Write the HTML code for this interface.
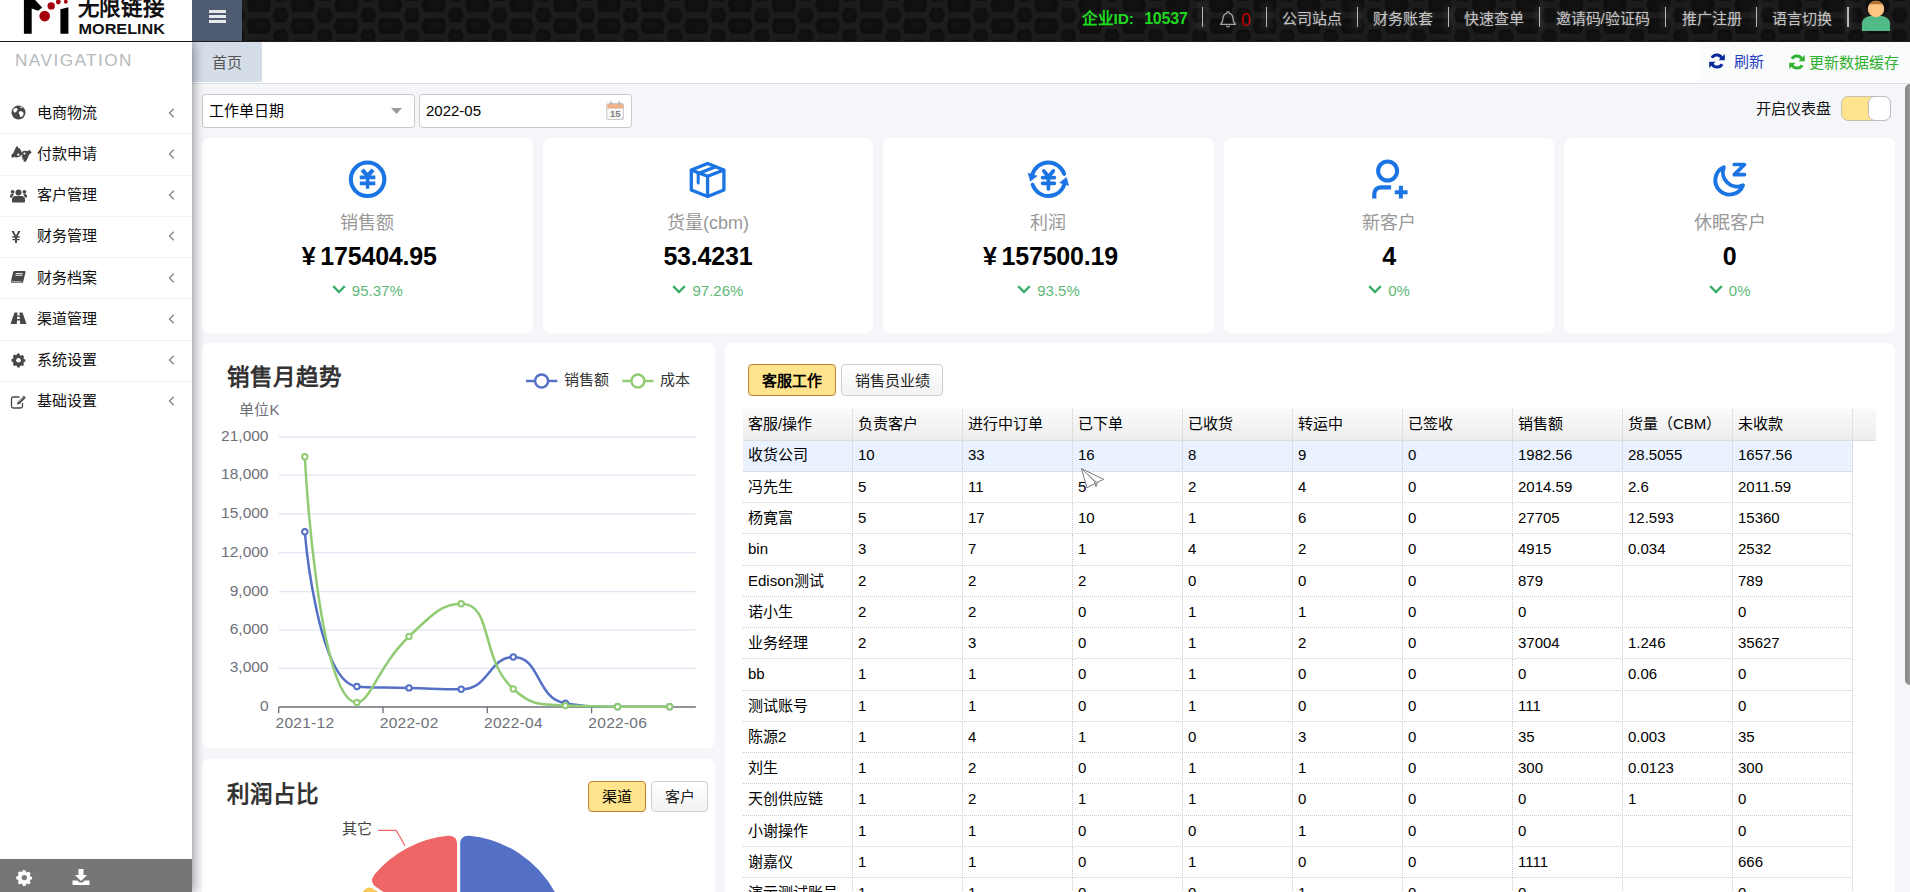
<!DOCTYPE html>
<html lang="zh-CN">
<head>
<meta charset="utf-8">
<title>MoreLink</title>
<style>
*{box-sizing:border-box;margin:0;padding:0}
html,body{width:1910px;height:892px;overflow:hidden}
body{font-family:"Liberation Sans",sans-serif;font-size:15px;color:#000;background:#f5f6fa;position:relative}
.abs{position:absolute}
#header{position:absolute;left:0;top:0;width:1910px;height:42px;background:#18181a;overflow:hidden;z-index:6}
#hexbg{position:absolute;left:242px;top:0;width:1668px;height:42px}
#logo{position:absolute;left:0;top:0;width:192px;height:41px;background:#fff;overflow:hidden}
#burger{position:absolute;left:192px;top:0;width:50px;height:41px;background:#4f5b70}
#burger i{position:absolute;left:17.4px;width:16.6px;height:3.2px;background:#e6e8ec}
#hline{position:absolute;left:0;top:41px;width:1910px;height:1px;background:#1c1c1c}
.tn{position:absolute;top:9px;height:20px;line-height:20px;font-size:15px;color:#c4c4c4;white-space:nowrap;text-shadow:0 0 2px rgba(255,255,255,.25)}
.tsep{position:absolute;top:7px;width:1.3px;height:20px;background:#b6b6b6;box-shadow:0 0 7px 3px rgba(255,255,255,.09)}
#sidebar{position:absolute;left:0;top:42px;width:192px;height:850px;background:#fff;box-shadow:1px 0 11px rgba(0,0,0,.45);z-index:5}
#navtitle{position:absolute;left:15px;top:8px;font-size:17.2px;line-height:20px;letter-spacing:1.45px;color:#b3babd}
.mi{position:absolute;left:0;width:192px;height:41.25px;border-bottom:1px solid #f0f1f3}
.mi span{position:absolute;left:37px;top:9.5px;font-size:15px;color:#111;line-height:20px;white-space:nowrap}
.mi svg.ic{position:absolute;left:9px;top:10px;width:19px;height:19px;overflow:visible}
.mi svg.ch{position:absolute;left:168px;top:14.5px;width:7px;height:10px}
#sbfoot{position:absolute;left:0;top:817px;width:192px;height:33px;background:#767676}
#tabs{position:absolute;left:192px;top:42px;width:1718px;height:41.7px;background:#fff;border-bottom:1px solid #dcdfe3}
#tab1{position:absolute;left:0;top:0;width:70px;height:39.7px;background:#d5dde9;color:#555;font-size:15px;line-height:41px;text-align:center}
#tools{position:absolute;left:1507px;top:0;width:211px;height:40px;background:#fafbfb}
.card{position:absolute;background:#fff;border-radius:7px}
.sel{position:absolute;top:94px;height:34px;background:#fff;border:1px solid #c9c9c9;border-radius:3.5px;font-size:15px;line-height:32px;padding-left:6px;color:#000}
.st-l{position:absolute;left:0;width:100%;text-align:center;font-size:18px;color:#999;top:73px;line-height:24px}
.st-v{position:absolute;left:0;width:100%;text-align:center;font-size:25px;font-weight:bold;color:#000;top:103px;line-height:30px;letter-spacing:-0.2px;white-space:nowrap}
.st-p{position:absolute;left:0;width:100%;text-align:center;font-size:15px;color:#5fb878;top:142.5px;line-height:20px;white-space:nowrap}
.st-p svg{display:inline-block;width:14px;height:9px;margin-right:6px;vertical-align:2px}
.st-i{position:absolute;left:50%;top:19px;width:44px;height:44px;margin-left:-21.5px}
.btn{position:absolute;height:32px;line-height:30px;text-align:center;font-size:15px;border-radius:4px;border:1px solid #cfcfcf;background:linear-gradient(#fff,#f2f2f2);color:#222;white-space:nowrap}
.btn.on{background:#ffe48d;border-color:#bd8234;color:#000}
.h2{position:absolute;font-size:22px;font-weight:bold;color:#333;line-height:30px;white-space:nowrap}
#grid{position:absolute;left:743px;top:409px;width:1133px;height:500px;overflow:hidden;font-size:15px}
#ghead{position:absolute;left:0;top:0;width:1133px;height:31.5px;background:linear-gradient(#fafafa,#ededed);border-bottom:1px solid #ddd}
.gh{position:absolute;top:0;height:31px;line-height:30px;padding-left:5px;border-right:1px dotted #ccc;white-space:nowrap;overflow:hidden}
.gr{position:absolute;left:0;width:1110px;height:31.25px;line-height:29px;border-bottom:1px dotted #ccc}
.gc{position:absolute;top:0;height:31.25px;line-height:inherit;padding-left:5px;border-right:1px dotted #ccc;white-space:nowrap;overflow:hidden}
</style>
</head>
<body>
<div id="header">
<svg id="hexbg" width="1668" height="42">
<defs>
<radialGradient id="hg" cx="50%" cy="50%" r="60%"><stop offset="0" stop-color="#131314"/><stop offset="1" stop-color="#0d0d0e"/></radialGradient>
<pattern id="hx" x="-5" y="-6.1" width="43.75" height="21.4" patternUnits="userSpaceOnUse">
<rect width="43.75" height="21.4" fill="#1c1c1d"/>

<polygon points="9.575,10.7 12.175,3.250 31.575,3.250 34.175,10.7 31.575,18.150 12.175,18.150" fill="url(#hg)"/>
<polygon points="-8,0 -5,-7.2 5,-7.2 8,0 5,7.2 -5,7.2" fill="url(#hg)"/>
<polygon points="35.75,0 38.75,-7.2 48.75,-7.2 51.75,0 48.75,7.2 38.75,7.2" fill="url(#hg)"/>
<polygon points="-8,21.4 -5,14.2 5,14.2 8,21.4 5,28.6 -5,28.6" fill="url(#hg)"/>
<polygon points="35.75,21.4 38.75,14.2 48.75,14.2 51.75,21.4 48.75,28.6 38.75,28.6" fill="url(#hg)"/>
</pattern>
</defs>
<rect width="1668" height="42" fill="url(#hx)"/>
</svg>
<div id="logo"><svg width="192" height="41" viewBox="0 0 192 41">
<polygon points="23.9,-2 33.2,-2 42.2,7.500 38.1,10.700 31.7,8.600 31.7,33.700 23.9,33.700" fill="#000"/>
<polygon points="60.4,9.300 68.4,7.300 68.4,33.700 60.4,33.700" fill="#000"/>
<circle cx="44.7" cy="16.1" r="5.300" fill="#a3000b"/>
<circle cx="51.2" cy="5.9" r="3.700" fill="#a8000c"/>
<circle cx="58.3" cy="2" r="2.400" fill="#a8000c"/>
<circle cx="65.8" cy="1.8" r="1.900" fill="#a8000c"/>
<text x="77.5" y="15.3" font-family="Liberation Sans, sans-serif" font-weight="bold" font-size="22.5" textLength="87.5" lengthAdjust="spacingAndGlyphs" fill="#111">无限链接</text>
<text x="78.5" y="33.6" font-family="Liberation Sans, sans-serif" font-weight="bold" font-size="14.4" textLength="86.5" lengthAdjust="spacingAndGlyphs" fill="#111">MORELINK</text>
</svg></div>
<div id="burger"><i style="top:10.2px"></i><i style="top:15px"></i><i style="top:19.8px"></i></div>
<div id="hline"></div>
<div class="tn" style="left:1082px;color:#1fd91f;font-weight:bold;font-size:15.5px;text-shadow:none;letter-spacing:-0.2px">企业ID:<span style="margin-left:10.5px;font-size:16px">10537</span></div>
<div class="tsep" style="left:1201.95px"></div>
<div class="tsep" style="left:1265.65px"></div>
<div class="tsep" style="left:1356.75px"></div>
<div class="tsep" style="left:1447.95px"></div>
<div class="tsep" style="left:1539.15px"></div>
<div class="tsep" style="left:1665.15px"></div>
<div class="tsep" style="left:1755.95px"></div>
<div class="tsep" style="left:1847.35px"></div>
<svg class="abs" style="left:1219px;top:9.6px" width="18" height="19" viewBox="0 0 18 19"><path d="M9 1.6c-.7 0-1.2.5-1.2 1.2v.5C5.4 3.9 4 6 4 8.6c0 3.6-1.2 4.7-2.4 5.7h14.8C15.200 13.300 14 12.200 14 8.600c0-2.600-1.400-4.700-3.800-5.300v-.5C10.200 2.100 9.700 1.600 9 1.600z" fill="none" stroke="#a4a4a4" stroke-width="1.3" stroke-linejoin="round"/><path d="M7.300 15.600a1.800 1.800 0 0 0 3.400 0" fill="none" stroke="#a4a4a4" stroke-width="1.3"/></svg>
<div class="tn" style="left:1241px;top:9.5px;color:#c40000;text-shadow:none;font-size:17.5px">0</div>
<div class="tn" style="left:1282px">公司站点</div>
<div class="tn" style="left:1373px">财务账套</div>
<div class="tn" style="left:1464.4px">快速查单</div>
<div class="tn" style="left:1555.5px">邀请码/验证码</div>
<div class="tn" style="left:1681.5px">推广注册</div>
<div class="tn" style="left:1772.3px">语言切换</div>
<svg class="abs" style="left:1861px;top:0" width="30" height="32" viewBox="0 0 30 32"><defs><clipPath id="hc"><rect x="0" y="0" width="30" height="4.200"/></clipPath><linearGradient id="hair" x1="0" y1="0" x2="0" y2="1"><stop offset="0" stop-color="#a9641f"/><stop offset="1" stop-color="#d08f52"/></linearGradient></defs><path d="M.9 31V24C.9 19 5 16.500 9.500 16H20.500C25 16.500 29.100 19 29.100 24V31z" fill="#50b985"/><circle cx="15" cy="9" r="8.200" fill="#fdc483"/><circle cx="15" cy="9" r="8.200" fill="#b5702d" clip-path="url(#hc)"/></svg>
</div>
<div id="tabs"><div id="tab1">首页</div><div id="tools"></div>
<div class="abs" style="left:1517px;top:11px;width:16px;height:16px"><svg width="16" height="16" viewBox="0 0 16 16"><path d="M13.300 6.200A5.700 5.700 0 0 0 2.900 4.700" fill="none" stroke="#0a2a9a" stroke-width="3"/><path d="M2.700 9.800A5.700 5.700 0 0 0 13.100 11.300" fill="none" stroke="#0a2a9a" stroke-width="3"/><path d="M9.600 7.200h6.200V1z" fill="#0a2a9a"/><path d="M6.400 8.800H.2V15z" fill="#0a2a9a"/></svg></div>
<div class="abs" style="left:1541.5px;top:10px;font-size:15px;line-height:20px;color:#2440c0">刷新</div>
<div class="abs" style="left:1596.5px;top:11.5px;width:16px;height:16px"><svg width="16" height="16" viewBox="0 0 16 16"><path d="M13.300 6.200A5.700 5.700 0 0 0 2.900 4.700" fill="none" stroke="#35b335" stroke-width="3"/><path d="M2.700 9.800A5.700 5.700 0 0 0 13.100 11.300" fill="none" stroke="#35b335" stroke-width="3"/><path d="M9.600 7.200h6.200V1z" fill="#35b335"/><path d="M6.400 8.800H.2V15z" fill="#35b335"/></svg></div>
<div class="abs" style="left:1616.5px;top:11px;font-size:15px;line-height:20px;color:#2eb02e;white-space:nowrap">更新数据缓存</div>
</div>
<div id="sidebar"><div id="navtitle">NAVIGATION</div>
<div class="mi" style="top:51.0px;"><svg class="ic" viewBox="0 0 19 19"><circle cx="9.500" cy="9.500" r="7" fill="#484848"/><path d="M5 5.500c1.500-1 3-.5 3.500.5s-.5 1.500-1 2.500S6 10 5 9 4 6.500 5 5.500zM10.500 8.500c1.500-.5 3.500 0 4 1.500s-1 3.500-2.500 4-1-1.500-1.500-2.500-1.500-2.500 0-3zM11 3.500c1 0 2 .5 2.500 1.500-1 .5-2 0-2.500-1.500z" fill="#fff"/></svg><span>电商物流</span><svg class="ch" viewBox="0 0 7 10"><path d="M5.800 .8L1.500 5l4.300 4.200" fill="none" stroke="#8a8a8a" stroke-width="1.400"/></svg></div>
<div class="mi" style="top:92.25px;"><svg class="ic" viewBox="0 0 19 19"><g transform="translate(0 .7)"><path d="M2.200 10.500L4.500 8 7 2.200 8.500 1.200 9.300 3.200 10.800 3.500 11.300 5 12.500 6 12 7.500 13 9 11 11.700 8 12.700 5 12.200 3 13.200z" fill="#484848"/><path d="M12.300 7.500L15 6 19 6.200 20.500 5 22.700 7.700 20 10 18.500 14 16.500 17.200 14.300 16.500 15 15 12.800 14.500 14 13 12.300 12 13.500 10.500 11.800 9.500z" fill="#484848"/><circle cx="9.300" cy="10" r="1.100" fill="#fff"/><circle cx="15.400" cy="8.800" r="1.100" fill="#fff"/></g></svg><span>付款申请</span><svg class="ch" viewBox="0 0 7 10"><path d="M5.800 .8L1.500 5l4.300 4.200" fill="none" stroke="#8a8a8a" stroke-width="1.400"/></svg></div>
<div class="mi" style="top:133.5px;"><svg class="ic" viewBox="0 0 19 19"><circle cx="9.500" cy="6.500" r="3" fill="#484848"/><path d="M4 16.500c-.5 0-1-.4-1-1v-2c0-2 1.600-3.500 3.500-3.500h6c1.900 0 3.500 1.500 3.500 3.500v2c0 .6-.5 1-1 1z" fill="#484848"/><circle cx="3.600" cy="5.800" r="1.900" fill="#484848"/><circle cx="15.400" cy="5.800" r="1.900" fill="#484848"/><path d="M1 11.500V10c0-1.200 1-2 2-2h2c-.8.800-1.500 2-1.600 3.500zM18 11.500V10c0-1.200-1-2-2-2h-2c.8.800 1.500 2 1.600 3.500z" fill="#484848"/></svg><span>客户管理</span><svg class="ch" viewBox="0 0 7 10"><path d="M5.800 .8L1.500 5l4.300 4.200" fill="none" stroke="#8a8a8a" stroke-width="1.400"/></svg></div>
<div class="mi" style="top:174.75px;"><svg class="ic" viewBox="0 0 19 19"><path d="M2.500 4h2.300l2.200 4.500L9.200 4h2.300L8.600 9.300h2v1.400H8v1.200h2.600v1.400H8V16H6v-2.700H3.400v-1.400H6v-1.200H3.400V9.300h2z" fill="#484848"/></svg><span>财务管理</span><svg class="ch" viewBox="0 0 7 10"><path d="M5.800 .8L1.500 5l4.300 4.200" fill="none" stroke="#8a8a8a" stroke-width="1.400"/></svg></div>
<div class="mi" style="top:216.0px;"><svg class="ic" viewBox="0 0 19 19"><path d="M5.500 3h10c.8 0 1.200.6 1 1.300l-2.300 9.400c-.2.800-.9 1.300-1.700 1.300H3.700c-1.200 0-2-.9-1.700-2l2-8.500C4.200 3.600 4.800 3 5.500 3z" fill="#484848"/><path d="M6.800 5.600h7M6.400 7.300h7" stroke="#fff" stroke-width=".9"/><path d="M3 12.700c0 .8.500 1.200 1.200 1.200h8.600" stroke="#fff" stroke-width=".8" fill="none"/></svg><span>财务档案</span><svg class="ch" viewBox="0 0 7 10"><path d="M5.800 .8L1.500 5l4.300 4.200" fill="none" stroke="#8a8a8a" stroke-width="1.400"/></svg></div>
<div class="mi" style="top:257.25px;"><svg class="ic" viewBox="0 0 19 19"><path d="M5.500 3.500h3l-.2 3h2.400l-.2-3h3l4 11.500h-6.300l-.2-3.500H8l-.2 3.500H1.500zM8.200 7.800l-.1 2.200h2.800l-.1-2.200z" fill="#484848"/></svg><span>渠道管理</span><svg class="ch" viewBox="0 0 7 10"><path d="M5.800 .8L1.500 5l4.300 4.200" fill="none" stroke="#8a8a8a" stroke-width="1.400"/></svg></div>
<div class="mi" style="top:298.5px;"><svg class="ic" viewBox="0 0 19 19"><path d="M9.500 2.500l1.300.1.500 1.700 1.300.6 1.600-.8 1.700 1.700-.8 1.600.6 1.300 1.700.5v2.400l-1.700.5-.6 1.300.8 1.600-1.700 1.700-1.600-.8-1.300.6-.5 1.700H8.200l-.5-1.700-1.300-.6-1.600.8-1.700-1.700.8-1.600-.6-1.300-1.700-.5V8.700l1.700-.5.6-1.300-.8-1.600L4.800 3.600l1.600.8 1.300-.6.5-1.700z" fill="#484848" transform="translate(1.1 .4) scale(.88)"/><circle cx="9.500" cy="9.200" r="2.300" fill="#fff"/></svg><span>系统设置</span><svg class="ch" viewBox="0 0 7 10"><path d="M5.800 .8L1.500 5l4.300 4.200" fill="none" stroke="#8a8a8a" stroke-width="1.400"/></svg></div>
<div class="mi" style="top:339.75px;border-bottom:none;"><svg class="ic" viewBox="0 0 19 19"><path d="M13.500 11v3.200c0 1-.8 1.800-1.800 1.800H4.300c-1 0-1.800-.8-1.800-1.800V6.800c0-1 .8-1.800 1.800-1.800h6.200" fill="none" stroke="#484848" stroke-width="1.300"/><path d="M8 12.500l.6-2.600 6.200-6.200 2 2-6.200 6.200z" fill="#484848"/><path d="M9.300 10.300l5-5" stroke="#fff" stroke-width=".7"/></svg><span>基础设置</span><svg class="ch" viewBox="0 0 7 10"><path d="M5.800 .8L1.500 5l4.300 4.200" fill="none" stroke="#8a8a8a" stroke-width="1.400"/></svg></div>
<div id="sbfoot">
<svg class="abs" style="left:15px;top:9px" width="19" height="19" viewBox="0 0 19 19"><path d="M9.500 2.500l1.300.1.500 1.700 1.300.6 1.600-.8 1.700 1.700-.8 1.600.6 1.300 1.700.5v2.400l-1.700.5-.6 1.300.8 1.600-1.700 1.700-1.600-.8-1.300.6-.5 1.700H8.200l-.5-1.700-1.300-.6-1.600.8-1.700-1.700.8-1.600-.6-1.300-1.700-.5V8.700l1.700-.5.6-1.300-.8-1.600L4.800 3.600l1.600.8 1.300-.6.5-1.700z" fill="#fff" transform="translate(-.3 -.3)"/><circle cx="9.300" cy="9.600" r="2.700" fill="#797979"/></svg>
<svg class="abs" style="left:71px;top:9px" width="20" height="19" viewBox="0 0 20 19"><path d="M7.500 1h5v6h3.500L10 13 4 7h3.500z" fill="#fff"/><path d="M1.500 12.500h5l2 2h3l2-2h5V17h-17z" fill="#fff"/></svg>
</div></div>
<div class="sel" style="left:202px;width:213px">工作单日期<svg class="abs" style="right:12px;top:13px" width="11" height="6" viewBox="0 0 11 6"><path d="M0 0h11L5.500 6z" fill="#9a9a9a"/></svg></div>
<div class="sel" style="left:419px;width:213px">2022-05<svg class="abs" style="right:6px;top:5px" width="20" height="21" viewBox="0 0 20 21"><rect x="1.800" y="3.500" width="16.700" height="16" rx="1.500" fill="#f8f8f8" stroke="#c6c6c6"/><rect x="2.300" y="4" width="15.700" height="3.600" fill="#f3b48c"/><path d="M2.300 7.900h15.700" stroke="#e2825e" stroke-width=".8"/><rect x="5" y="1.300" width="1.800" height="4.200" rx=".8" fill="#b4b4b4"/><rect x="13.400" y="1.300" width="1.800" height="4.200" rx=".8" fill="#b4b4b4"/><text x="10.200" y="16.600" text-anchor="middle" font-size="9.500" font-weight="bold" font-family="Liberation Sans, sans-serif" fill="#7c7c7c">15</text><path d="M14.500 20h4v-4z" fill="#d6d6d6"/></svg></div>
<div class="abs" style="left:1756px;top:99px;font-size:15px;line-height:20px;color:#111;white-space:nowrap">开启仪表盘</div>
<div class="abs" style="left:1841px;top:96px;width:50px;height:25px;border-radius:7px;background:#ffe48d;border:1px solid #c9c2b0"><div class="abs" style="right:-1px;top:-1px;width:23px;height:25px;border-radius:7px;background:#fff;border:1px solid #bdbdbd"></div></div>
<div class="card" style="left:202.0px;top:138px;width:330.6px;height:195px">
<svg class="st-i" viewBox="0 0 44 44"><circle cx="21.600" cy="22.300" r="16.750" fill="none" stroke="#1b74e4" stroke-width="4.100"/><path d="M16.200 12.800l5.400 6 5.400-6" fill="none" stroke="#1b74e4" stroke-width="4.200"/><path d="M21.600 18.500V31.700" fill="none" stroke="#1b74e4" stroke-width="3.500"/><path d="M13.800 20.400h15.500M13.800 26.300h15.500" fill="none" stroke="#1b74e4" stroke-width="3.700"/></svg>
<div class="st-l">销售额</div><div class="st-v" style="padding-left:4px;">¥ 175404.95</div>
<div class="st-p"><svg viewBox="0 0 14 9"><path d="M1.200 1.200L7 7l5.800-5.800" fill="none" stroke="#3dae6a" stroke-width="2.400"/></svg>95.37%</div>
</div>
<div class="card" style="left:542.6px;top:138px;width:330.6px;height:195px">
<svg class="st-i" viewBox="0 0 44 44"><path d="M21.600 6.500L37.900 13v20L21.600 39.500 5.300 33V13z" fill="none" stroke="#1b74e4" stroke-width="3.300" stroke-linejoin="round"/><path d="M5.300 13L21.600 19.300 37.900 13M21.600 19.300v20" fill="none" stroke="#1b74e4" stroke-width="3.300" stroke-linejoin="round"/><path d="M13 16.300L29.600 9.700" fill="none" stroke="#1b74e4" stroke-width="3.300"/><path d="M12.200 16.500v9.500" stroke="#1b74e4" stroke-width="3" stroke-linecap="round"/></svg>
<div class="st-l">货量(cbm)</div><div class="st-v" style="">53.4231</div>
<div class="st-p"><svg viewBox="0 0 14 9"><path d="M1.200 1.200L7 7l5.800-5.800" fill="none" stroke="#3dae6a" stroke-width="2.400"/></svg>97.26%</div>
</div>
<div class="card" style="left:883.2px;top:138px;width:330.6px;height:195px">
<svg class="st-i" viewBox="0 0 44 44"><path d="M37.200 16.900A16.700 16.700 0 0 0 5.400 17.400" fill="none" stroke="#1b74e4" stroke-width="3.900" stroke-linecap="round"/><path d="M5.600 27.700A16.700 16.700 0 0 0 37.400 27.200" fill="none" stroke="#1b74e4" stroke-width="3.900" stroke-linecap="round"/><path d="M1.200 16.200l8.900 2.700-6.700 5.300z" fill="#1b74e4" stroke="#1b74e4" stroke-width=".6" stroke-linejoin="round"/><path d="M41.600 28.400l-8.900-2.700 6.700-5.300z" fill="#1b74e4" stroke="#1b74e4" stroke-width=".6" stroke-linejoin="round"/><path d="M16.800 14l4.600 5.600 4.900-5.600M21.400 19.600V31.800M15.600 20.600h11.800M15.600 26.300h11.800" fill="none" stroke="#1b74e4" stroke-width="3.700" stroke-linecap="round"/></svg>
<div class="st-l">利润</div><div class="st-v" style="padding-left:4px;">¥ 157500.19</div>
<div class="st-p"><svg viewBox="0 0 14 9"><path d="M1.200 1.200L7 7l5.800-5.800" fill="none" stroke="#3dae6a" stroke-width="2.400"/></svg>93.5%</div>
</div>
<div class="card" style="left:1223.8px;top:138px;width:330.6px;height:195px">
<svg class="st-i" viewBox="0 0 44 44"><circle cx="19.600" cy="14" r="9.500" fill="none" stroke="#1b74e4" stroke-width="4"/><path d="M6.300 41.400V37c0-4 3-6.700 7-6.700h9.800" fill="none" stroke="#1b74e4" stroke-width="4.200"/><path d="M32.900 28.700v12.700M26.800 35.200h12.800" stroke="#1b74e4" stroke-width="4"/></svg>
<div class="st-l">新客户</div><div class="st-v" style="">4</div>
<div class="st-p"><svg viewBox="0 0 14 9"><path d="M1.200 1.200L7 7l5.800-5.800" fill="none" stroke="#3dae6a" stroke-width="2.400"/></svg>0%</div>
</div>
<div class="card" style="left:1564.4px;top:138px;width:330.6px;height:195px">
<svg class="st-i" viewBox="0 0 44 44"><path d="M15.800 10.200A14.300 14.300 0 1 0 35 28.300 14.300 14.300 0 0 1 15.800 10.200z" fill="none" stroke="#1b74e4" stroke-width="3.900" stroke-linejoin="round"/><path d="M26.300 7.500h10.200L26.300 17.600h10.200" fill="none" stroke="#1b74e4" stroke-width="3.700" stroke-linejoin="round" stroke-linecap="round"/></svg>
<div class="st-l">休眠客户</div><div class="st-v" style="">0</div>
<div class="st-p"><svg viewBox="0 0 14 9"><path d="M1.200 1.200L7 7l5.800-5.800" fill="none" stroke="#3dae6a" stroke-width="2.400"/></svg>0%</div>
</div>
<div class="card" style="left:202px;top:343px;width:513px;height:405px"></div>
<div class="h2" style="left:227px;top:363px;font-size:22.5px">销售月趋势</div>
<svg class="abs" style="left:202px;top:343px" width="513" height="405" viewBox="202 343 513 405" font-family="Liberation Sans, sans-serif" font-size="15"><path d="M278.7 437H695.8" stroke="#e0e6f1" stroke-width="1.300"/><path d="M278.7 475.2H695.8" stroke="#e0e6f1" stroke-width="1.300"/><path d="M278.7 513.8H695.8" stroke="#e0e6f1" stroke-width="1.300"/><path d="M278.7 552.7H695.8" stroke="#e0e6f1" stroke-width="1.300"/><path d="M278.7 591.6H695.8" stroke="#e0e6f1" stroke-width="1.300"/><path d="M278.7 629.9H695.8" stroke="#e0e6f1" stroke-width="1.300"/><path d="M278.7 668.4H695.8" stroke="#e0e6f1" stroke-width="1.300"/><text x="268.5" y="441.0" text-anchor="end" font-size="15.500" fill="#6e7079">21,000</text><text x="268.5" y="479.2" text-anchor="end" font-size="15.500" fill="#6e7079">18,000</text><text x="268.5" y="517.8" text-anchor="end" font-size="15.500" fill="#6e7079">15,000</text><text x="268.5" y="556.7" text-anchor="end" font-size="15.500" fill="#6e7079">12,000</text><text x="268.5" y="595.6" text-anchor="end" font-size="15.500" fill="#6e7079">9,000</text><text x="268.5" y="633.9" text-anchor="end" font-size="15.500" fill="#6e7079">6,000</text><text x="268.5" y="672.4" text-anchor="end" font-size="15.500" fill="#6e7079">3,000</text><text x="268.5" y="711.0" text-anchor="end" font-size="15.500" fill="#6e7079">0</text><text x="239.4" y="414.6" fill="#6e7079">单位K</text><path d="M278.7 707H695.8" stroke="#6e7079" stroke-width="1.300"/><path d="M278.7 707v6.300" stroke="#6e7079" stroke-width="1.300"/><path d="M383 707v6.300" stroke="#6e7079" stroke-width="1.300"/><path d="M487.3 707v6.300" stroke="#6e7079" stroke-width="1.300"/><path d="M591.6 707v6.300" stroke="#6e7079" stroke-width="1.300"/><text x="304.8" y="727.800" text-anchor="middle" font-size="15.500" textLength="58.500" fill="#6e7079">2021-12</text><text x="409" y="727.800" text-anchor="middle" font-size="15.500" textLength="58.500" fill="#6e7079">2022-02</text><text x="513.3" y="727.800" text-anchor="middle" font-size="15.500" textLength="58.500" fill="#6e7079">2022-04</text><text x="617.6" y="727.800" text-anchor="middle" font-size="15.500" textLength="58.500" fill="#6e7079">2022-06</text><path d="M304.8,531.8 C304.8,531.8 317.4,682.1 356.9,686.5 C369.5,687.9 382.9,687.2 409.0,687.9 C435.1,688.6 437.2,689.3 461.2,689.3 C489.4,689.3 488.9,657.0 513.3,657.0 C541.0,657.0 535.6,698.5 565.4,703.2 C587.8,706.7 591.5,706.7 617.6,706.7 C643.6,706.7 669.7,706.7 669.7,706.7" fill="none" stroke="#5470c6" stroke-width="2.500" stroke-linejoin="round"/><circle cx="304.8" cy="531.8" r="2.700" fill="#fff" stroke="#5470c6" stroke-width="2"/><circle cx="356.9" cy="686.5" r="2.700" fill="#fff" stroke="#5470c6" stroke-width="2"/><circle cx="409" cy="687.9" r="2.700" fill="#fff" stroke="#5470c6" stroke-width="2"/><circle cx="461.2" cy="689.3" r="2.700" fill="#fff" stroke="#5470c6" stroke-width="2"/><circle cx="513.3" cy="657" r="2.700" fill="#fff" stroke="#5470c6" stroke-width="2"/><circle cx="565.4" cy="703.2" r="2.700" fill="#fff" stroke="#5470c6" stroke-width="2"/><circle cx="617.6" cy="706.7" r="2.700" fill="#fff" stroke="#5470c6" stroke-width="2"/><circle cx="669.7" cy="706.7" r="2.700" fill="#fff" stroke="#5470c6" stroke-width="2"/><path d="M304.8,456.8 C304.8,456.8 317.9,702.5 356.9,702.5 C370.0,702.5 378.9,665.0 409.0,636.5 C431.0,615.6 441.3,603.8 461.2,603.8 C493.5,603.8 479.6,658.7 513.3,689.0 C531.7,705.6 538.7,704.4 565.4,705.6 C590.9,706.7 591.5,706.7 617.6,706.7 C643.6,706.7 669.7,706.7 669.7,706.7" fill="none" stroke="#91cc75" stroke-width="2.500" stroke-linejoin="round"/><circle cx="304.8" cy="456.8" r="2.700" fill="#fff" stroke="#91cc75" stroke-width="2"/><circle cx="356.9" cy="702.5" r="2.700" fill="#fff" stroke="#91cc75" stroke-width="2"/><circle cx="409" cy="636.5" r="2.700" fill="#fff" stroke="#91cc75" stroke-width="2"/><circle cx="461.2" cy="603.8" r="2.700" fill="#fff" stroke="#91cc75" stroke-width="2"/><circle cx="513.3" cy="689" r="2.700" fill="#fff" stroke="#91cc75" stroke-width="2"/><circle cx="565.4" cy="705.6" r="2.700" fill="#fff" stroke="#91cc75" stroke-width="2"/><circle cx="617.6" cy="706.7" r="2.700" fill="#fff" stroke="#91cc75" stroke-width="2"/><circle cx="669.7" cy="706.7" r="2.700" fill="#fff" stroke="#91cc75" stroke-width="2"/><path d="M526 381h31.300" stroke="#5470c6" stroke-width="2.500"/><circle cx="541.600" cy="381" r="6.500" fill="#fff" stroke="#5470c6" stroke-width="2.500"/><text x="563.500" y="385" fill="#333">销售额</text><path d="M622.300 381h31.300" stroke="#91cc75" stroke-width="2.500"/><circle cx="637.900" cy="381" r="6.500" fill="#fff" stroke="#91cc75" stroke-width="2.500"/><text x="659.800" y="385" fill="#333">成本</text></svg>
<div class="card" style="left:202px;top:759px;width:513px;height:200px"></div>
<div class="h2" style="left:227px;top:779.5px;font-size:22.5px">利润占比</div>
<div class="btn on" style="left:588px;top:781px;width:58px;height:31px;line-height:29px">渠道</div>
<div class="btn" style="left:651px;top:781px;width:57px;height:31px;line-height:29px">客户</div>
<svg class="abs" style="left:202px;top:759px" width="513" height="133" viewBox="202 759 513 133" font-family="Liberation Sans, sans-serif" font-size="15"><path d="M458.6,945.0L458.6,844.7Q458.6,833.7 469.6,834.2A111.3,111.3 0 1 1 358.3,993.2Q354.0,983.1 364.3,979.3Z" fill="#5470c6" stroke="#fff" stroke-width="3"/><path d="M458.6,945.0L364.3,979.3Q354.0,983.1 350.8,972.6A111.3,111.3 0 0 1 360.9,891.7Q366.7,882.3 375.7,888.5Z" fill="#fac858" stroke="#fff" stroke-width="3"/><path d="M458.6,945.0L375.7,888.5Q366.7,882.3 373.3,873.5A111.3,111.3 0 0 1 447.6,834.2Q458.6,833.7 458.6,844.7Z" fill="#ee6666" stroke="#fff" stroke-width="3"/><path d="M378.200 830.400H396.200L405 845.700" fill="none" stroke="#ee6666" stroke-width="1.200"/><text x="342" y="834" fill="#444">其它</text></svg>
<div class="card" style="left:725px;top:343px;width:1170px;height:600px"></div>
<div class="btn on" style="left:748px;top:364px;width:88px;height:32px;line-height:32.5px;font-weight:bold">客服工作</div>
<div class="btn" style="left:841px;top:364px;width:102px;height:32px;line-height:32.5px">销售员业绩</div>
<div id="grid"><div id="ghead">
<div class="gh" style="left:0px;width:110px">客服/操作</div>
<div class="gh" style="left:110px;width:110px">负责客户</div>
<div class="gh" style="left:220px;width:110px">进行中订单</div>
<div class="gh" style="left:330px;width:110px">已下单</div>
<div class="gh" style="left:440px;width:110px">已收货</div>
<div class="gh" style="left:550px;width:110px">转运中</div>
<div class="gh" style="left:660px;width:110px">已签收</div>
<div class="gh" style="left:770px;width:110px">销售额</div>
<div class="gh" style="left:880px;width:110px">货量（CBM）</div>
<div class="gh" style="left:990px;width:120px">未收款</div>
</div>
<div class="gr" style="top:31.5px;background:#eaf2ff;line-height:27px;">
<div class="gc" style="left:0px;width:110px">收货公司</div>
<div class="gc" style="left:110px;width:110px">10</div>
<div class="gc" style="left:220px;width:110px">33</div>
<div class="gc" style="left:330px;width:110px">16</div>
<div class="gc" style="left:440px;width:110px">8</div>
<div class="gc" style="left:550px;width:110px">9</div>
<div class="gc" style="left:660px;width:110px">0</div>
<div class="gc" style="left:770px;width:110px">1982.56</div>
<div class="gc" style="left:880px;width:110px">28.5055</div>
<div class="gc" style="left:990px;width:120px">1657.56</div>
</div>
<div class="gr" style="top:62.75px;">
<div class="gc" style="left:0px;width:110px">冯先生</div>
<div class="gc" style="left:110px;width:110px">5</div>
<div class="gc" style="left:220px;width:110px">11</div>
<div class="gc" style="left:330px;width:110px">5</div>
<div class="gc" style="left:440px;width:110px">2</div>
<div class="gc" style="left:550px;width:110px">4</div>
<div class="gc" style="left:660px;width:110px">0</div>
<div class="gc" style="left:770px;width:110px">2014.59</div>
<div class="gc" style="left:880px;width:110px">2.6</div>
<div class="gc" style="left:990px;width:120px">2011.59</div>
</div>
<div class="gr" style="top:94.0px;">
<div class="gc" style="left:0px;width:110px">杨寛富</div>
<div class="gc" style="left:110px;width:110px">5</div>
<div class="gc" style="left:220px;width:110px">17</div>
<div class="gc" style="left:330px;width:110px">10</div>
<div class="gc" style="left:440px;width:110px">1</div>
<div class="gc" style="left:550px;width:110px">6</div>
<div class="gc" style="left:660px;width:110px">0</div>
<div class="gc" style="left:770px;width:110px">27705</div>
<div class="gc" style="left:880px;width:110px">12.593</div>
<div class="gc" style="left:990px;width:120px">15360</div>
</div>
<div class="gr" style="top:125.25px;">
<div class="gc" style="left:0px;width:110px">bin</div>
<div class="gc" style="left:110px;width:110px">3</div>
<div class="gc" style="left:220px;width:110px">7</div>
<div class="gc" style="left:330px;width:110px">1</div>
<div class="gc" style="left:440px;width:110px">4</div>
<div class="gc" style="left:550px;width:110px">2</div>
<div class="gc" style="left:660px;width:110px">0</div>
<div class="gc" style="left:770px;width:110px">4915</div>
<div class="gc" style="left:880px;width:110px">0.034</div>
<div class="gc" style="left:990px;width:120px">2532</div>
</div>
<div class="gr" style="top:156.5px;">
<div class="gc" style="left:0px;width:110px">Edison测试</div>
<div class="gc" style="left:110px;width:110px">2</div>
<div class="gc" style="left:220px;width:110px">2</div>
<div class="gc" style="left:330px;width:110px">2</div>
<div class="gc" style="left:440px;width:110px">0</div>
<div class="gc" style="left:550px;width:110px">0</div>
<div class="gc" style="left:660px;width:110px">0</div>
<div class="gc" style="left:770px;width:110px">879</div>
<div class="gc" style="left:880px;width:110px"></div>
<div class="gc" style="left:990px;width:120px">789</div>
</div>
<div class="gr" style="top:187.75px;">
<div class="gc" style="left:0px;width:110px">诺小生</div>
<div class="gc" style="left:110px;width:110px">2</div>
<div class="gc" style="left:220px;width:110px">2</div>
<div class="gc" style="left:330px;width:110px">0</div>
<div class="gc" style="left:440px;width:110px">1</div>
<div class="gc" style="left:550px;width:110px">1</div>
<div class="gc" style="left:660px;width:110px">0</div>
<div class="gc" style="left:770px;width:110px">0</div>
<div class="gc" style="left:880px;width:110px"></div>
<div class="gc" style="left:990px;width:120px">0</div>
</div>
<div class="gr" style="top:219.0px;">
<div class="gc" style="left:0px;width:110px">业务经理</div>
<div class="gc" style="left:110px;width:110px">2</div>
<div class="gc" style="left:220px;width:110px">3</div>
<div class="gc" style="left:330px;width:110px">0</div>
<div class="gc" style="left:440px;width:110px">1</div>
<div class="gc" style="left:550px;width:110px">2</div>
<div class="gc" style="left:660px;width:110px">0</div>
<div class="gc" style="left:770px;width:110px">37004</div>
<div class="gc" style="left:880px;width:110px">1.246</div>
<div class="gc" style="left:990px;width:120px">35627</div>
</div>
<div class="gr" style="top:250.25px;">
<div class="gc" style="left:0px;width:110px">bb</div>
<div class="gc" style="left:110px;width:110px">1</div>
<div class="gc" style="left:220px;width:110px">1</div>
<div class="gc" style="left:330px;width:110px">0</div>
<div class="gc" style="left:440px;width:110px">1</div>
<div class="gc" style="left:550px;width:110px">0</div>
<div class="gc" style="left:660px;width:110px">0</div>
<div class="gc" style="left:770px;width:110px">0</div>
<div class="gc" style="left:880px;width:110px">0.06</div>
<div class="gc" style="left:990px;width:120px">0</div>
</div>
<div class="gr" style="top:281.5px;">
<div class="gc" style="left:0px;width:110px">测试账号</div>
<div class="gc" style="left:110px;width:110px">1</div>
<div class="gc" style="left:220px;width:110px">1</div>
<div class="gc" style="left:330px;width:110px">0</div>
<div class="gc" style="left:440px;width:110px">1</div>
<div class="gc" style="left:550px;width:110px">0</div>
<div class="gc" style="left:660px;width:110px">0</div>
<div class="gc" style="left:770px;width:110px">111</div>
<div class="gc" style="left:880px;width:110px"></div>
<div class="gc" style="left:990px;width:120px">0</div>
</div>
<div class="gr" style="top:312.75px;">
<div class="gc" style="left:0px;width:110px">陈源2</div>
<div class="gc" style="left:110px;width:110px">1</div>
<div class="gc" style="left:220px;width:110px">4</div>
<div class="gc" style="left:330px;width:110px">1</div>
<div class="gc" style="left:440px;width:110px">0</div>
<div class="gc" style="left:550px;width:110px">3</div>
<div class="gc" style="left:660px;width:110px">0</div>
<div class="gc" style="left:770px;width:110px">35</div>
<div class="gc" style="left:880px;width:110px">0.003</div>
<div class="gc" style="left:990px;width:120px">35</div>
</div>
<div class="gr" style="top:344.0px;">
<div class="gc" style="left:0px;width:110px">刘生</div>
<div class="gc" style="left:110px;width:110px">1</div>
<div class="gc" style="left:220px;width:110px">2</div>
<div class="gc" style="left:330px;width:110px">0</div>
<div class="gc" style="left:440px;width:110px">1</div>
<div class="gc" style="left:550px;width:110px">1</div>
<div class="gc" style="left:660px;width:110px">0</div>
<div class="gc" style="left:770px;width:110px">300</div>
<div class="gc" style="left:880px;width:110px">0.0123</div>
<div class="gc" style="left:990px;width:120px">300</div>
</div>
<div class="gr" style="top:375.25px;">
<div class="gc" style="left:0px;width:110px">天创供应链</div>
<div class="gc" style="left:110px;width:110px">1</div>
<div class="gc" style="left:220px;width:110px">2</div>
<div class="gc" style="left:330px;width:110px">1</div>
<div class="gc" style="left:440px;width:110px">1</div>
<div class="gc" style="left:550px;width:110px">0</div>
<div class="gc" style="left:660px;width:110px">0</div>
<div class="gc" style="left:770px;width:110px">0</div>
<div class="gc" style="left:880px;width:110px">1</div>
<div class="gc" style="left:990px;width:120px">0</div>
</div>
<div class="gr" style="top:406.5px;">
<div class="gc" style="left:0px;width:110px">小谢操作</div>
<div class="gc" style="left:110px;width:110px">1</div>
<div class="gc" style="left:220px;width:110px">1</div>
<div class="gc" style="left:330px;width:110px">0</div>
<div class="gc" style="left:440px;width:110px">0</div>
<div class="gc" style="left:550px;width:110px">1</div>
<div class="gc" style="left:660px;width:110px">0</div>
<div class="gc" style="left:770px;width:110px">0</div>
<div class="gc" style="left:880px;width:110px"></div>
<div class="gc" style="left:990px;width:120px">0</div>
</div>
<div class="gr" style="top:437.75px;">
<div class="gc" style="left:0px;width:110px">谢嘉仪</div>
<div class="gc" style="left:110px;width:110px">1</div>
<div class="gc" style="left:220px;width:110px">1</div>
<div class="gc" style="left:330px;width:110px">0</div>
<div class="gc" style="left:440px;width:110px">1</div>
<div class="gc" style="left:550px;width:110px">0</div>
<div class="gc" style="left:660px;width:110px">0</div>
<div class="gc" style="left:770px;width:110px">1111</div>
<div class="gc" style="left:880px;width:110px"></div>
<div class="gc" style="left:990px;width:120px">666</div>
</div>
<div class="gr" style="top:469.0px;">
<div class="gc" style="left:0px;width:110px">演示测试账号</div>
<div class="gc" style="left:110px;width:110px">1</div>
<div class="gc" style="left:220px;width:110px">1</div>
<div class="gc" style="left:330px;width:110px">0</div>
<div class="gc" style="left:440px;width:110px">0</div>
<div class="gc" style="left:550px;width:110px">1</div>
<div class="gc" style="left:660px;width:110px">0</div>
<div class="gc" style="left:770px;width:110px">0</div>
<div class="gc" style="left:880px;width:110px"></div>
<div class="gc" style="left:990px;width:120px">0</div>
</div>
</div>
<svg class="abs" style="left:1079px;top:466px;z-index:9" width="28" height="26" viewBox="0 0 28 26"><path d="M2.500 2.600L24.700 13.400 16.700 17 7.900 21.800z" fill="#fff" fill-opacity=".75" stroke="#7a7a7a" stroke-width="1" stroke-linejoin="round"/><path d="M2.500 2.600L15.300 15.200 17 20.600 18.600 16.200" fill="#cfcfcf" stroke="#7a7a7a" stroke-width="1" stroke-linejoin="round"/><path d="M2.500 2.600L17.500 16.600" stroke="#9a9a9a" stroke-width=".8"/></svg>
<div class="abs" style="left:1905px;top:84px;width:10px;height:601px;border-radius:5px;background:linear-gradient(90deg,#858585,#a9a9a9);z-index:9"></div>
</body>
</html>
